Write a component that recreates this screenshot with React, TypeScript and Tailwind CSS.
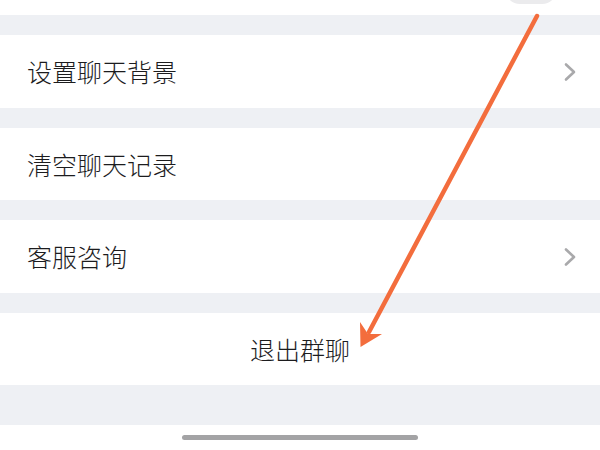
import React from 'react';

const Chevron = () => (
  <svg width="14" height="20" viewBox="0 0 14 20" fill="none">
    <polyline points="3,2.5 11,10 3,17.5" stroke="#a9a9ab" strokeWidth="2.6" strokeLinecap="round" strokeLinejoin="round" />
  </svg>
);

const Gap = ({ h = 'h-[20px]' }: { h?: string }) => <div className={`${h} bg-[#eef0f4]`} />;

const Row = ({ label, arrow, h }: { label: string; arrow?: boolean; h: string }) => (
  <div className={`${h} bg-white flex items-center justify-between pl-[27px] pr-[23px]`}>
    <span className="text-[25px] font-light text-[#1c1c1e] leading-none">{label}</span>
    {arrow && <Chevron />}
  </div>
);

export default function App() {
  return (
    <div
      className="relative w-[600px] h-[450px] overflow-hidden bg-[#eef0f4] flex flex-col"
      style={{ fontFamily: '"Noto Sans CJK SC", "Noto Sans", sans-serif' }}
    >
      {/* 顶部开关残留 */}
      <div className="h-[15px] bg-white flex justify-end items-start pr-[43px] overflow-hidden">
        <div className="w-[52px] h-[30px] -mt-[26px] rounded-full bg-[#ebebed]" />
      </div>
      <Gap />
      <Row label="设置聊天背景" arrow h="h-[73px]" />
      <Gap />
      <Row label="清空聊天记录" h="h-[72px]" />
      <Gap />
      <Row label="客服咨询" arrow h="h-[73px]" />
      <Gap />
      <div className="h-[72px] bg-white flex items-center justify-center">
        <span className="text-[25px] font-light text-[#1c1c1e] leading-none">退出群聊</span>
      </div>
      <Gap h="h-[40px]" />
      <div className="h-[25px] bg-white flex justify-center pt-[10px]">
        <div className="w-[236px] h-[5px] rounded-full bg-[#a3a3a5]" />
      </div>

      {/* 标注箭头 */}
      <svg className="absolute inset-0 pointer-events-none" width="600" height="450" viewBox="0 0 600 450">
        <line x1="537" y1="16" x2="369" y2="332" stroke="#f36d3d" strokeWidth="4.5" strokeLinecap="round" />
        <path d="M360.5 347 L360 322 L368 334 L382 334 Z" fill="#f36d3d" />
      </svg>
    </div>
  );
}
